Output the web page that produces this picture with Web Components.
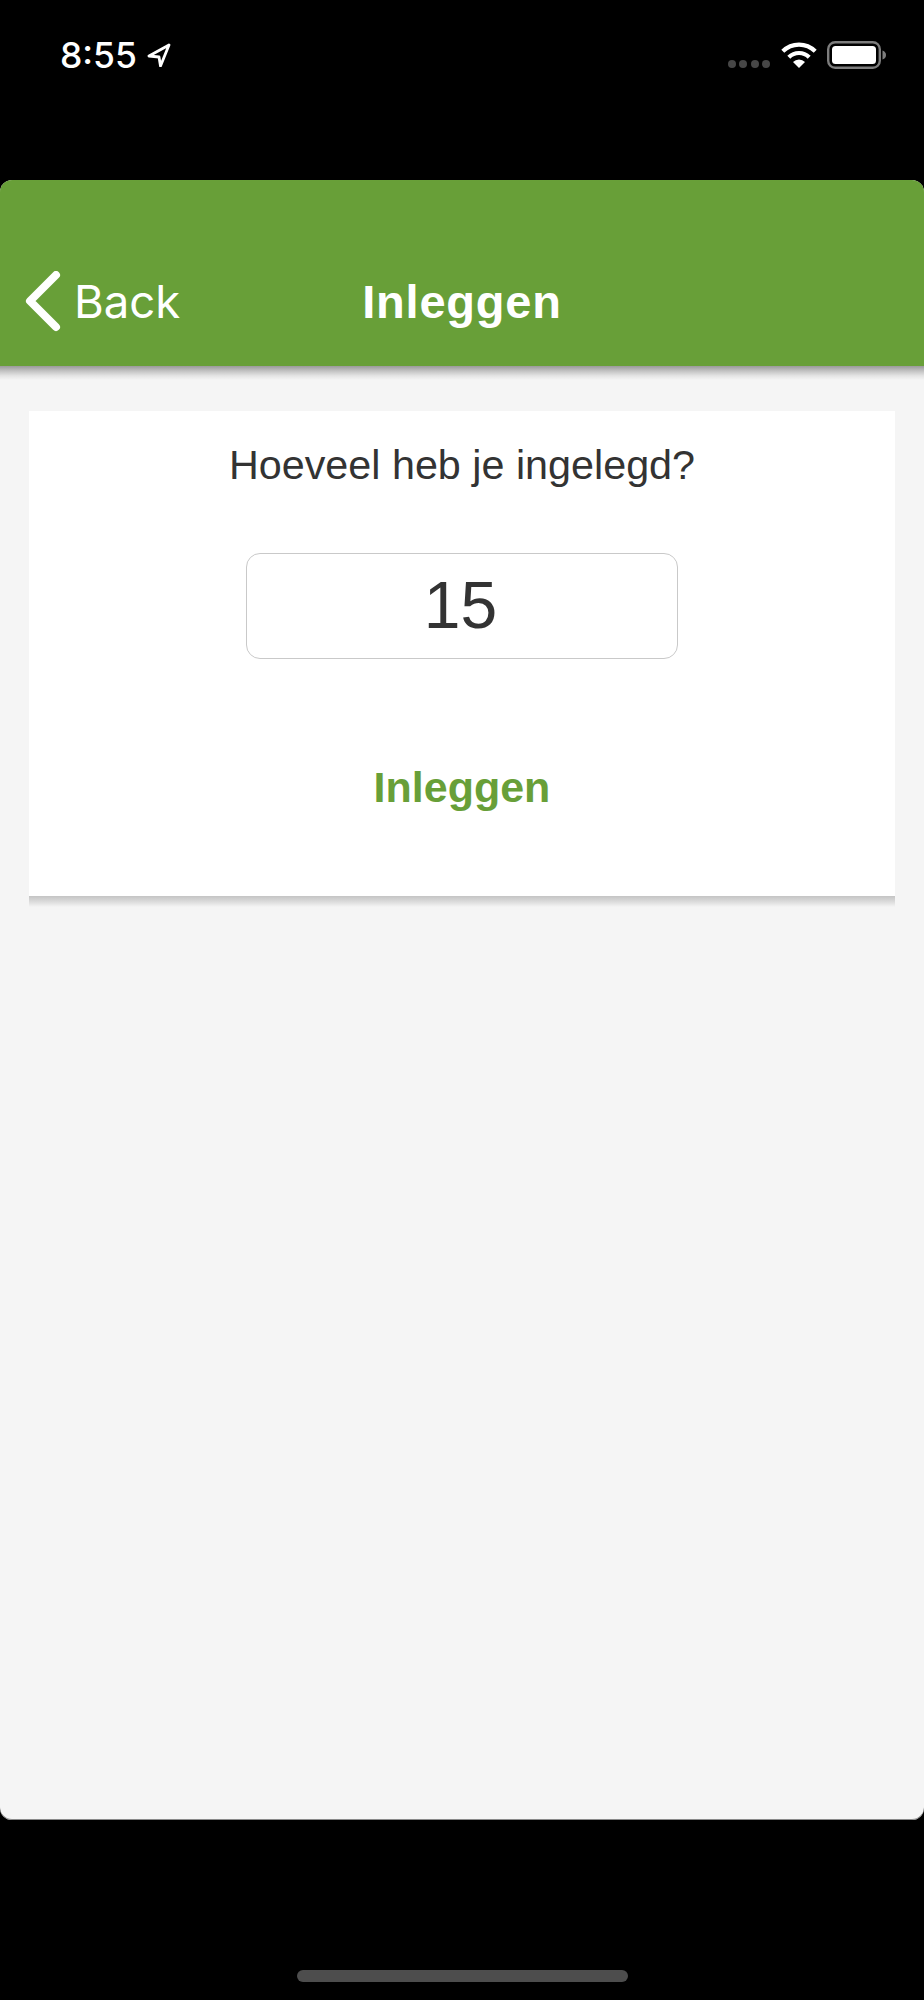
<!DOCTYPE html>
<html lang="nl">
<head>
<meta charset="utf-8">
<title>Inleggen</title>
<style>
  html, body { margin: 0; padding: 0; background: #000; }
  body { width: 924px; height: 2000px; font-family: "Liberation Sans", Arial, sans-serif; }
</style>
</head>
<body>
<app-screen>
  <status-bar slot="status" time="8:55"></status-bar>
  <nav-bar slot="nav" back="Back">Inleggen</nav-bar>
  <deposit-card question="Hoeveel heb je ingelegd?" amount="15" action="Inleggen"></deposit-card>
  <home-indicator slot="home"></home-indicator>
</app-screen>

<script>
const screenTemplate = document.createElement("template");
screenTemplate.innerHTML = `
  <style>
    :host { display: flex; flex-direction: column; width: 924px; height: 2000px; background: #000; }
    .panel {
      display: flex;
      flex-direction: column;
      height: 1640px;
      background: #f5f5f5;
      border-radius: 12px;
      overflow: hidden;
      box-shadow: inset 0 -1px 0 #8a8a8a;
    }
    .content { padding: 31px 29px 0; }
  </style>
  <slot name="status"></slot>
  <div class="panel">
    <slot name="nav"></slot>
    <div class="content"><slot></slot></div>
  </div>
  <slot name="home"></slot>
`;

const statusTemplate = document.createElement("template");
statusTemplate.innerHTML = `
  <style>
    :host { display: flex; box-sizing: border-box; height: 180px; padding: 41px 37px 0 60px; justify-content: space-between; align-items: flex-start; color: #fff; }
    .left { display: flex; align-items: flex-start; }
    .time { font: 500 35.5px/30px Inter, "Liberation Sans", sans-serif; }
    .arrow { display: block; width: 24px; height: 24px; margin: 2px 0 0 10px; }
    .right { display: flex; align-items: flex-start; }
    .dots { display: flex; gap: 3.5px; margin: 19px 11px 0 0; }
    .dots i { width: 8px; height: 8px; border-radius: 50%; background: #474747; }
    .wifi { display: block; width: 36px; height: 27px; margin: 1px 10px 0 0; }
    .battery { display: block; width: 60px; height: 28px; }
  </style>
  <div class="left">
    <span class="time"></span>
    <svg class="arrow" viewBox="0 0 24 24" fill="none" stroke="#fff" stroke-width="2.8" stroke-linejoin="round">
      <path d="M22 2 L2 13 L12 14 L13.5 23 Z"/>
    </svg>
  </div>
  <div class="right">
    <div class="dots"><i></i><i></i><i></i><i></i></div>
    <svg class="wifi" viewBox="0 0 36 27" fill="none" stroke="#fff" stroke-width="4.2">
      <path d="M1.8 9.2 A23 23 0 0 1 34.2 9.2"/>
      <path d="M7.8 15.2 A14.5 14.5 0 0 1 28.2 15.2"/>
      <path d="M18 26 L12 20 A8.4 8.4 0 0 1 24 20 Z" fill="#fff" stroke="none"/>
    </svg>
    <svg class="battery" viewBox="0 0 60 28">
      <rect x="1.2" y="1.2" width="51.6" height="25.6" rx="7" fill="none" stroke="#7d7d7d" stroke-width="2.4"/>
      <rect x="5" y="5" width="44" height="18" rx="3.5" fill="#fff"/>
      <path d="M55.5 9.5 C58 10.5 59 12 59 14 C59 16 58 17.5 55.5 18.5 Z" fill="#7d7d7d"/>
    </svg>
  </div>
`;

const navTemplate = document.createElement("template");
navTemplate.innerHTML = `
  <style>
    :host { display: block; }
    .bar {
      display: grid;
      grid-template-columns: 1fr auto 1fr;
      align-items: center;
      box-sizing: border-box;
      height: 186px;
      padding: 58px 0 0 0;
      background: #689f38;
      color: #fff;
    }
    .back { display: flex; align-items: center; gap: 11px; margin-left: 25px; font: 400 45.5px/60px Inter, "Liberation Sans", sans-serif; }
    .back svg { display: block; width: 38px; height: 62px; }
    .title { font-size: 47px; line-height: 60px; font-weight: 700; letter-spacing: 0.8px; }
    .shade { height: 14px; background: linear-gradient(#9a9a9a, #c2c2c2 35%, #e4e4e4 70%, #f5f5f5); }
  </style>
  <div class="bar">
    <div class="back">
      <svg viewBox="0 0 38 62" fill="none" stroke="#fff" stroke-width="8" stroke-linecap="round" stroke-linejoin="round">
        <path d="M31 4 L5 30 L31 56"/>
      </svg>
      <span class="label"></span>
    </div>
    <div class="title"><slot></slot></div>
    <div></div>
  </div>
  <div class="shade"></div>
`;

const cardTemplate = document.createElement("template");
cardTemplate.innerHTML = `
  <style>
    :host { display: block; }
    .card {
      display: flex;
      flex-direction: column;
      align-items: center;
      box-sizing: border-box;
      height: 485px;
      padding-top: 31px;
      background: #fff;
      color: #333;
    }
    .question { font-size: 41.3px; line-height: 46px; }
    .amount {
      box-sizing: border-box;
      width: 432px;
      height: 106px;
      margin-top: 65px;
      border: 1.5px solid #c9c9c9;
      border-radius: 14px;
      font-size: 66px;
      line-height: 103px;
      text-align: center;
      text-indent: -3px;
    }
    .action { margin-top: 98px; font-size: 43px; line-height: 60px; font-weight: 700; color: #689f38; }
    .shade { height: 11px; background: linear-gradient(#c4c4c4, #d8d8d8 45%, #f5f5f5); }
  </style>
  <div class="card">
    <div class="question"></div>
    <div class="amount"></div>
    <div class="action"></div>
  </div>
  <div class="shade"></div>
`;

const homeTemplate = document.createElement("template");
homeTemplate.innerHTML = `
  <style>
    :host { display: flex; justify-content: center; padding-top: 150px; }
    .pill { width: 331px; height: 12px; border-radius: 6px; background: #4d4d4d; }
  </style>
  <div class="pill"></div>
`;

class AppScreen extends HTMLElement {
  constructor() {
    super();
    this.attachShadow({ mode: "open" });
    this.shadowRoot.appendChild(screenTemplate.content.cloneNode(true));
  }
}

class StatusBar extends HTMLElement {
  constructor() {
    super();
    this.attachShadow({ mode: "open" });
    this.shadowRoot.appendChild(statusTemplate.content.cloneNode(true));
    this.shadowRoot.querySelector(".time").innerText = this.getAttribute("time");
  }
}

class NavBar extends HTMLElement {
  constructor() {
    super();
    this.attachShadow({ mode: "open" });
    this.shadowRoot.appendChild(navTemplate.content.cloneNode(true));
    this.shadowRoot.querySelector(".label").innerText = this.getAttribute("back");
  }
}

class DepositCard extends HTMLElement {
  constructor() {
    super();
    this.attachShadow({ mode: "open" });
    this.shadowRoot.appendChild(cardTemplate.content.cloneNode(true));
    this.shadowRoot.querySelector(".question").innerText = this.getAttribute("question");
    this.shadowRoot.querySelector(".amount").innerText = this.getAttribute("amount");
    this.shadowRoot.querySelector(".action").innerText = this.getAttribute("action");
  }
}

class HomeIndicator extends HTMLElement {
  constructor() {
    super();
    this.attachShadow({ mode: "open" });
    this.shadowRoot.appendChild(homeTemplate.content.cloneNode(true));
  }
}

window.customElements.define("app-screen", AppScreen);
window.customElements.define("status-bar", StatusBar);
window.customElements.define("nav-bar", NavBar);
window.customElements.define("deposit-card", DepositCard);
window.customElements.define("home-indicator", HomeIndicator);
</script>
</body>
</html>
